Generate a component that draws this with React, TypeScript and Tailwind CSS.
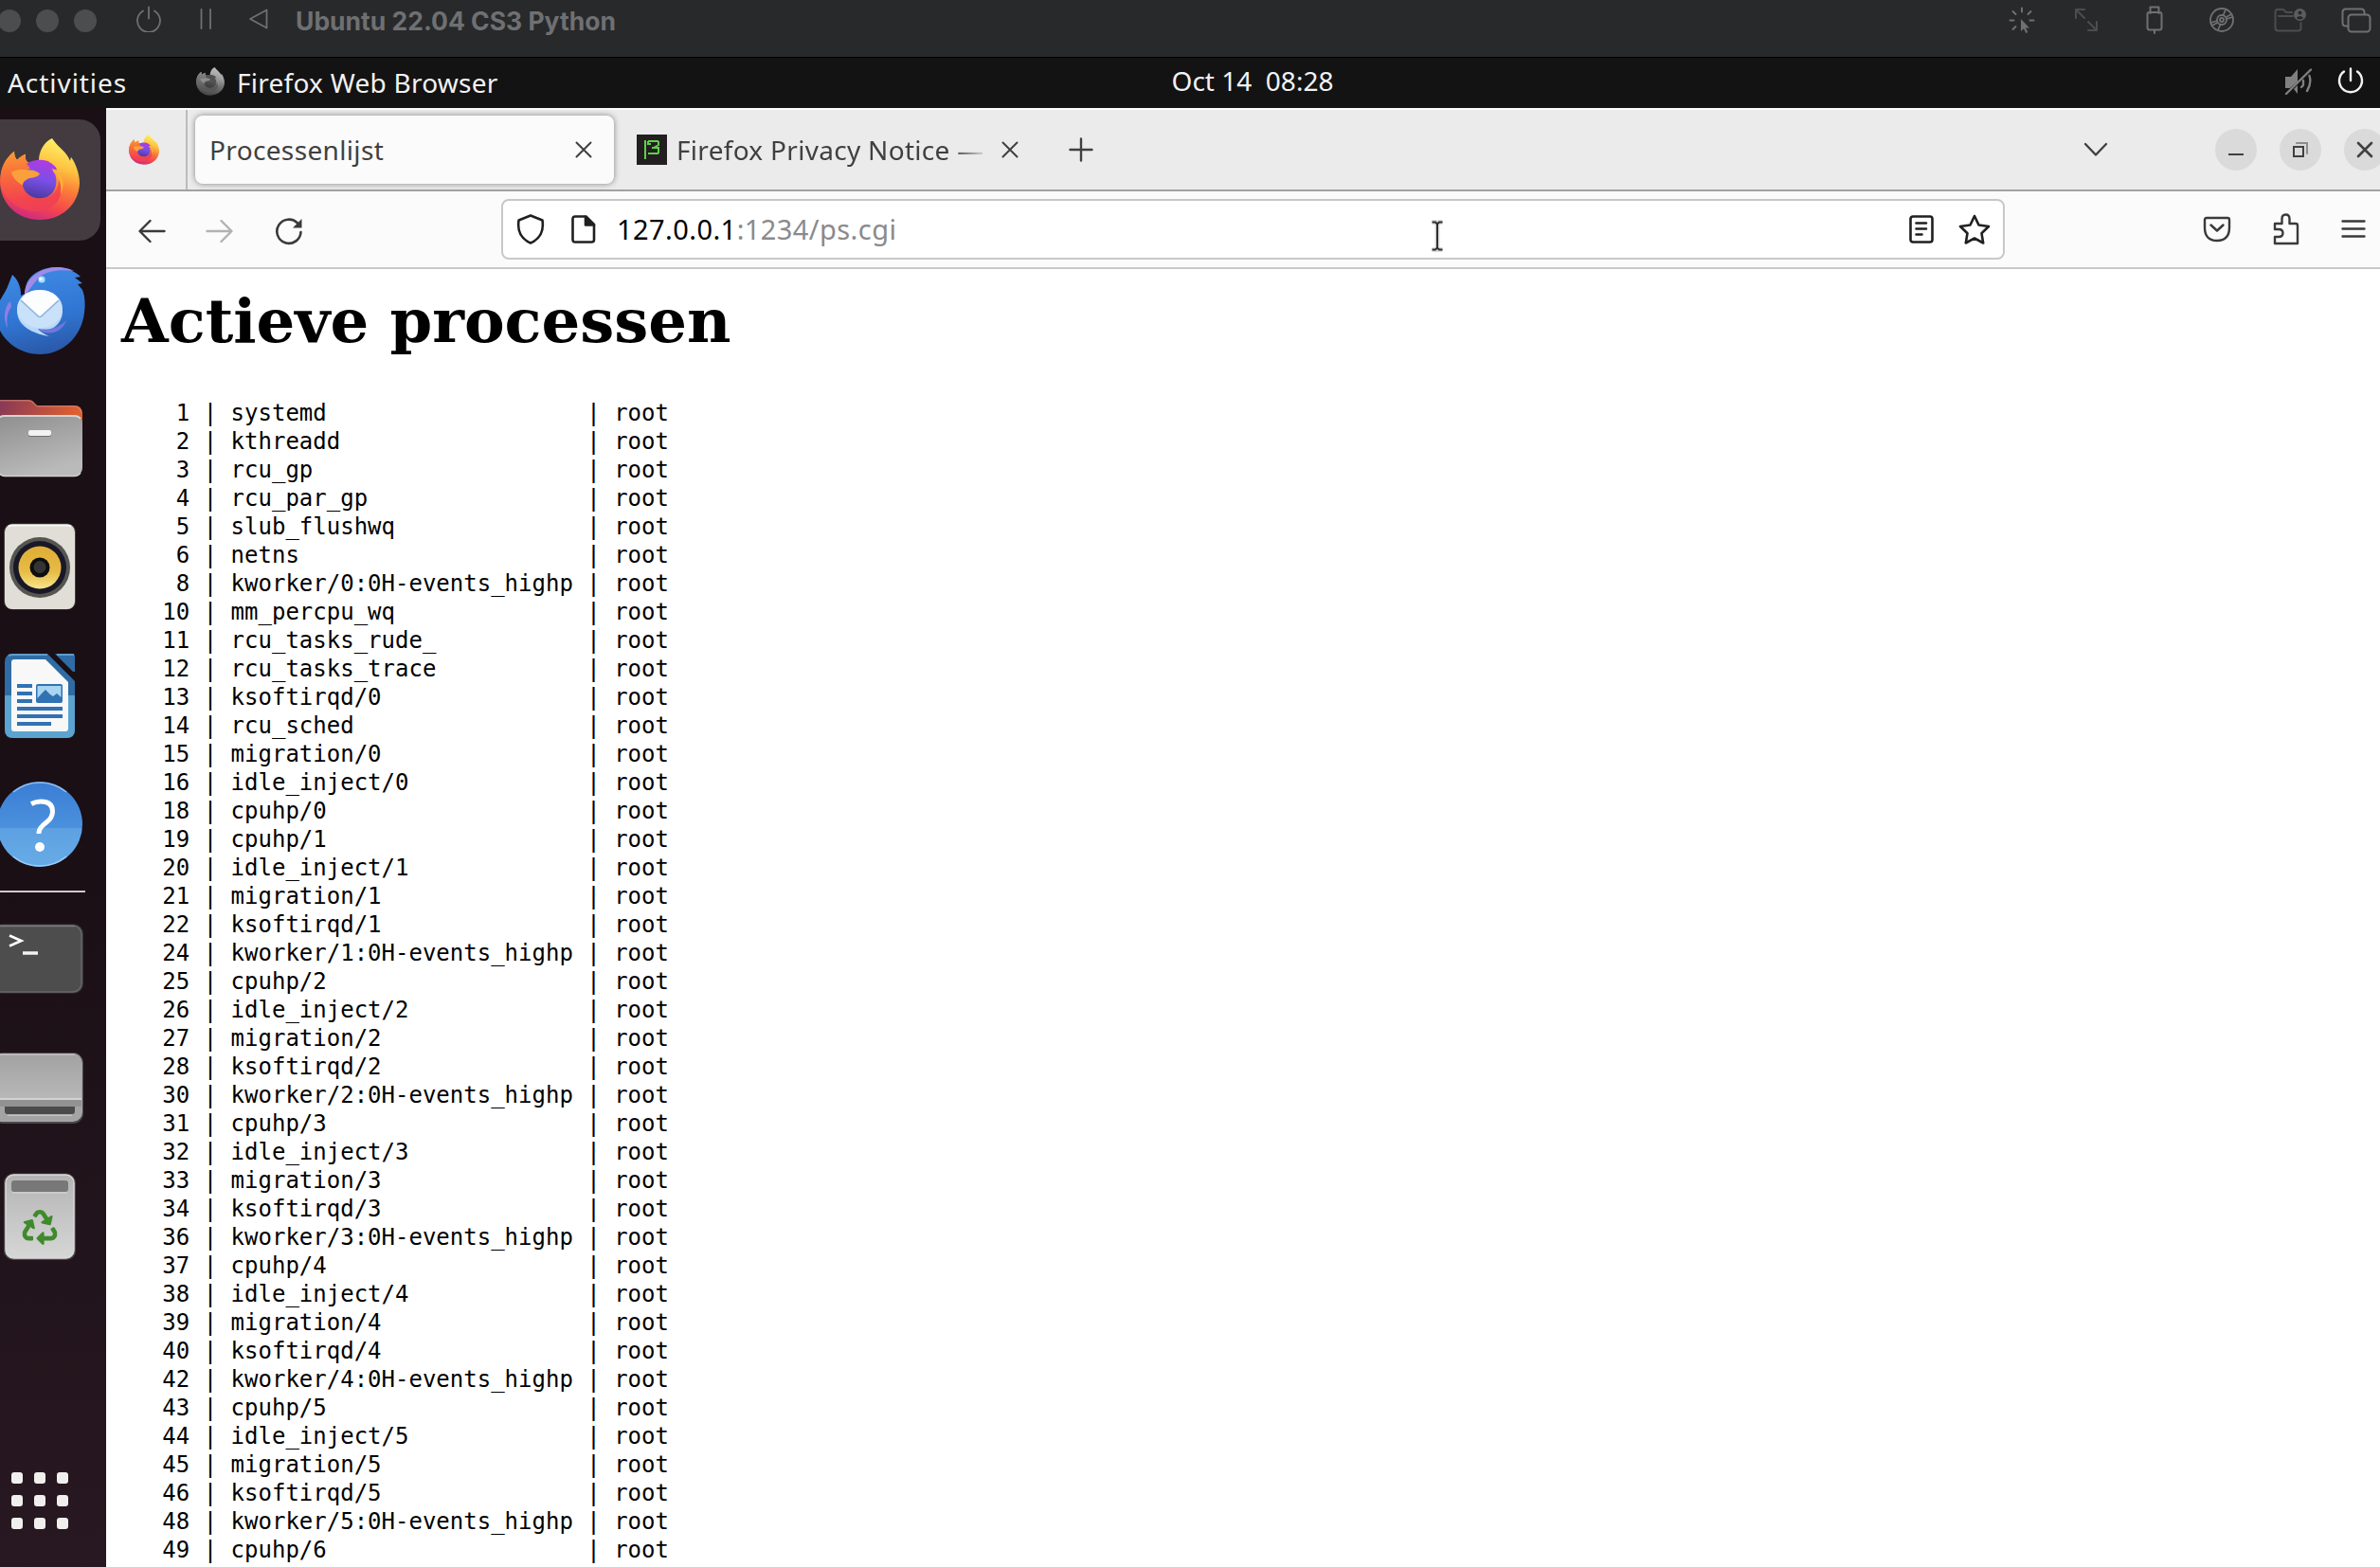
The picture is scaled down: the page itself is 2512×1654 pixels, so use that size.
import React from "react";
import { FaRecycle } from "react-icons/fa";

type Proc = [number, string];

const PROCS: Proc[] = [
  [1, "systemd"], [2, "kthreadd"], [3, "rcu_gp"], [4, "rcu_par_gp"], [5, "slub_flushwq"], [6, "netns"],
  [8, "kworker/0:0H-events_highp"], [10, "mm_percpu_wq"], [11, "rcu_tasks_rude_"], [12, "rcu_tasks_trace"],
  [13, "ksoftirqd/0"], [14, "rcu_sched"], [15, "migration/0"], [16, "idle_inject/0"], [18, "cpuhp/0"],
  [19, "cpuhp/1"], [20, "idle_inject/1"], [21, "migration/1"], [22, "ksoftirqd/1"], [24, "kworker/1:0H-events_highp"],
  [25, "cpuhp/2"], [26, "idle_inject/2"], [27, "migration/2"], [28, "ksoftirqd/2"], [30, "kworker/2:0H-events_highp"],
  [31, "cpuhp/3"], [32, "idle_inject/3"], [33, "migration/3"], [34, "ksoftirqd/3"], [36, "kworker/3:0H-events_highp"],
  [37, "cpuhp/4"], [38, "idle_inject/4"], [39, "migration/4"], [40, "ksoftirqd/4"], [42, "kworker/4:0H-events_highp"],
  [43, "cpuhp/5"], [44, "idle_inject/5"], [45, "migration/5"], [46, "ksoftirqd/5"], [48, "kworker/5:0H-events_highp"],
  [49, "cpuhp/6"],
];

const ROWS = PROCS.map(([pid, name]) => `${String(pid).padStart(5)} | ${name.padEnd(25)} | root`);

type IconProps = { className?: string; w: number; h: number; sw?: number; children: React.ReactNode };

function Icon({ className = "", w, h, sw = 2, children }: IconProps) {
  return (
    <svg
      className={`block shrink-0 ${className}`}
      width={w}
      height={h}
      viewBox={`0 0 ${w} ${h}`}
      fill="none"
      stroke="currentColor"
      strokeWidth={sw}
      strokeLinecap="round"
      strokeLinejoin="round"
    >
      {children}
    </svg>
  );
}

function Firefox({ className = "", id }: { className?: string; id: string }) {
  return (
    <svg className={`block shrink-0 ${className}`} viewBox="0 0 84 88" preserveAspectRatio="none">
      <defs>
        <linearGradient id={`${id}-b`} x1="0.72" y1="0" x2="0.4" y2="1">
          <stop offset="0" stopColor="#fff36b" />
          <stop offset="0.32" stopColor="#fdc23f" />
          <stop offset="0.55" stopColor="#fb7b38" />
          <stop offset="0.8" stopColor="#f4454e" />
          <stop offset="1" stopColor="#cf2a80" />
        </linearGradient>
        <linearGradient id={`${id}-l`} x1="0.3" y1="0" x2="0.4" y2="1">
          <stop offset="0" stopColor="#f99a35" />
          <stop offset="0.4" stopColor="#f9693c" />
          <stop offset="0.8" stopColor="#f3444f" />
          <stop offset="1" stopColor="#ee3f58" />
        </linearGradient>
        <linearGradient id={`${id}-g`} x1="0.6" y1="0" x2="0.4" y2="1">
          <stop offset="0" stopColor="#b13be0" />
          <stop offset="0.5" stopColor="#7b4fe8" />
          <stop offset="1" stopColor="#4a3a9e" />
        </linearGradient>
      </defs>
      <path
        d="M55 0C60 8 68 13 72 20L74 24L75 20C80 27 84 38 84 48C83 71 65 87 42 87C18 87 0 69 0 46C0 33 5 22 15 14C15 18 16 21 18 23C21 20 24 18 27 17C26 21 27 24 30 26L41 24C41 14 46 4 55 0Z"
        fill={`url(#${id}-b)`}
      />
      <path
        d="M15 14C15 18 16 21 18 23C21 20 24 18 27 17C26 21 27 24 30 26L34 30L24 46C26 60 38 66 52 62C58 59 62 52 62 44C70 62 58 78 36 78C18 76 4 64 1 50C-1 34 5 22 15 14Z"
        fill={`url(#${id}-l)`}
      />
      <path d="M28 27C36 22 48 22 53 26C58 29 60 32 60 34C56 32 54 33 58 38C62 48 58 64 42 64C30 64 22 54 24 44C25 38 28 34 32 32Z" fill={`url(#${id}-g)`} />
      <path d="M12 36C20 32 28 34 32 34C36 34 40 36 42 38C40 42 34 42 30 43C26 45 24 47 24 50C18 47 13 42 12 36Z" fill="#f9a03a" />
      <path d="M54 32C66 36 70 46 64 60C66 48 62 38 54 32Z" fill="#fbb03b" />
    </svg>
  );
}

function DockItem({ children }: { children: React.ReactNode }) {
  return (
    <svg className="block h-[136px] w-[112px] shrink-0" viewBox="0 0 112 136">
      {children}
    </svg>
  );
}

function Dock() {
  return (
    <nav className="flex w-[112px] shrink-0 flex-col bg-linear-to-b from-[#1a0f15] from-50% to-[#281821] pt-2">
      <div className="flex h-[136px] items-center">
        <div className="flex h-[128px] w-[106px] items-center rounded-r-[22px] bg-[#433b40]">
          <Firefox id="dock" className="-mt-0.5 h-[87px] w-[84px]" />
        </div>
      </div>

      <DockItem>
        <defs>
          <linearGradient id="tb" x1="0.4" y1="0" x2="0.6" y2="1">
            <stop offset="0" stopColor="#3f8ae6" />
            <stop offset="0.6" stopColor="#2f74d0" />
            <stop offset="1" stopColor="#2a57a6" />
          </linearGradient>
          <linearGradient id="env" x1="0" y1="0" x2="0" y2="1">
            <stop offset="0" stopColor="#ffffff" />
            <stop offset="1" stopColor="#bfdcf8" />
          </linearGradient>
        </defs>
        <path
          d="M13 32C18 36 22 44 22 52L27 48C27 34 42 24 60 24C72 25 80 29 85 34L79 35L87 41L82 42L87 48C90 56 90 64 89 72C86 98 66 116 42 116C18 116 -4 98 -5 72C-3 60 6 52 9 42Z"
          fill="url(#tb)"
        />
        <path d="M22 40L26 36V52L22 54Z" fill="#1a0f15" />
        <path d="M26 54C25 36 44 24 60 24C68 24 74 26 78 28C62 26 50 28 42 34C34 42 32 48 26 54Z" fill="#a08be8" />
        <path d="M11 60C4 66 3 80 8 88C6 76 9 70 12 66Z" fill="#8f7ee8" />
        <path d="M20 62C14 76 22 92 52 97C46 94 42 92 40 89C54 94 66 84 66 70Z" fill="#b8d8f8" />
        <path d="M40 89C52 91 62 88 70 80C66 92 54 96 44 92Z" fill="#6f78dc" />
        <ellipse cx="42" cy="68" rx="24" ry="20" fill="#c9e1f9" />
        <path d="M22 58C26 51 34 48 42 48C50 48 58 51 62 58L44 75Q42 77 40 75Z" fill="#fbfdff" />
        <path d="M22 59L40 75.500Q42 77.500 44 75.500L62 59" fill="none" stroke="#8fb4de" strokeWidth="1.600" />
        <circle cx="44" cy="37" r="3.600" fill="#a9dcfb" />
        <circle cx="43" cy="36.500" r="1.600" fill="#fff" />
      </DockItem>

      <DockItem>
        <defs>
          <linearGradient id="fo" x1="0" y1="0" x2="1" y2="0.2">
            <stop offset="0" stopColor="#82365a" />
            <stop offset="1" stopColor="#e2622e" />
          </linearGradient>
          <linearGradient id="ff" x1="0" y1="0" x2="0.4" y2="1">
            <stop offset="0" stopColor="#8e8e8e" />
            <stop offset="1" stopColor="#bababa" />
          </linearGradient>
        </defs>
        <path d="M-4 28H30Q34 28 36 31L39 34H78Q87 34 87 43V70H-4Z" fill="url(#fo)" />
        <path d="M-4 28.700H30Q33.500 28.700 36 32L39 34.700H78Q85 35 86 42" fill="none" stroke="#d68a78" strokeOpacity="0.6" strokeWidth="1.400" />
        <rect x="-4" y="44" width="91" height="65" rx="9" fill="url(#ff)" />
        <path d="M-2 48Q0 45 5 45H78Q83 45 85 48" fill="none" stroke="#d4d4d4" strokeWidth="2" />
        <path d="M0 106Q2 108.500 5 108.500H78Q83 108.500 85 105" fill="none" stroke="#d0d0d0" strokeWidth="1.500" />
        <rect x="30" y="62" width="24" height="5" rx="2" fill="#707070" />
        <rect x="30" y="60" width="24" height="6" rx="2" fill="#f2f2f2" />
      </DockItem>

      <DockItem>
        <defs>
          <linearGradient id="rb" x1="0" y1="0" x2="0" y2="1">
            <stop offset="0" stopColor="#e0ac34" />
            <stop offset="0.6" stopColor="#e6bc46" />
            <stop offset="1" stopColor="#f8e68c" />
          </linearGradient>
        </defs>
        <rect x="4" y="22.500" width="76" height="91" rx="9" fill="#45423f" />
        <rect x="5" y="23.500" width="74" height="89.500" rx="8" fill="#e1ded7" />
        <path d="M9 25.500Q11 24.500 13 24.500H71Q73 24.500 75 25.500" fill="none" stroke="#f7f6f3" strokeWidth="2" />
        <circle cx="42" cy="69" r="32" fill="#555552" />
        <circle cx="42" cy="69" r="28" fill="#191828" />
        <circle cx="42" cy="69" r="22.500" fill="url(#rb)" />
        <circle cx="42" cy="69" r="10.500" fill="#0e0e0e" />
        <circle cx="42" cy="68.500" r="6.500" fill="#343434" />
      </DockItem>

      <DockItem>
        <path d="M14 24H50L79 53V104Q79 113 70 113H14Q5 113 5 104V33Q5 24 14 24Z" fill="#2f6ca5" />
        <path d="M5 68H79V104Q79 113 70 113H14Q5 113 5 104Z" fill="#5ba3d0" />
        <path d="M58 24H76Q79 24 79 27V43H77Z" fill="#2f6ca5" />
        <path d="M60 25H78" stroke="#5f9ccb" strokeWidth="2" />
        <path d="M9 26Q11 25 14 25H50" fill="none" stroke="#5f9ccb" strokeWidth="2" />
        <path d="M15 30H48L72 54V103Q72 106 69 106H15Q12 106 12 103V33Q12 30 15 30Z" fill="#f8f8f8" />
        <path d="M18 56h16v4h-16zM18 64h16v4h-16zM18 72h16v4h-16zM18 80h48v4h-48zM18 88h48v4h-48zM18 96h36v4h-36z" fill="#3172b3" />
        <rect x="38" y="56" width="28" height="20" rx="2" fill="#3172b3" />
        <path d="M39.500 58H64.500V70L60 66L56 69L53 67L48 62L44 66L39.500 71Z" fill="#a9d5f2" />
      </DockItem>

      <DockItem>
        <defs>
          <clipPath id="helpclip">
            <circle cx="42" cy="68" r="45" />
          </clipPath>
          <linearGradient id="hp" x1="0" y1="0" x2="0" y2="1">
            <stop offset="0" stopColor="#3a7dd4" />
            <stop offset="1" stopColor="#5aa2e4" />
          </linearGradient>
        </defs>
        <circle cx="42" cy="68" r="45" fill="url(#hp)" />
        <rect x="-4" y="72" width="95" height="42" fill="#7ab8ec" fillOpacity="0.4" clipPath="url(#helpclip)" />
        <path d="M14 34A44 44 0 0 1 70 34" fill="none" stroke="#a8cdf2" strokeOpacity="0.8" strokeWidth="1.500" />
        <path d="M14 102A44 44 0 0 0 70 102" fill="none" stroke="#b5dcf6" strokeOpacity="0.7" strokeWidth="1.500" />
        <path d="M33 46.500Q38 44 43 44Q55.500 44 55.500 54.500Q55.500 61 49 66Q41 72 41 77V78" fill="none" stroke="#fff" strokeWidth="5" />
        <circle cx="42" cy="92" r="5" fill="#fff" />
      </DockItem>

      <div className="flex h-1.5 shrink-0 items-center">
        <div className="h-0.5 w-[90px] bg-[#cfcacd]" />
      </div>

      <DockItem>
        <rect x="-8" y="31.500" width="96" height="73" rx="10" fill="#3a3538" />
        <rect x="-7" y="33" width="93" height="70" rx="9" fill="#4d4d4d" stroke="#686868" strokeWidth="1.500" />
        <path d="M-2 33.500H79" stroke="#7b7b7b" strokeWidth="1.500" />
        <path d="M10 43.500L22.500 49L10 54.500" fill="none" stroke="#fff" strokeWidth="2.600" />
        <path d="M24 62H40" stroke="#f2f2f2" strokeWidth="3.500" />
      </DockItem>

      <DockItem>
        <defs>
          <linearGradient id="dr" x1="0" y1="0" x2="0" y2="1">
            <stop offset="0" stopColor="#a2a2a2" />
            <stop offset="1" stopColor="#b8b8b8" />
          </linearGradient>
        </defs>
        <rect x="-8" y="31" width="96" height="75" rx="11" fill="#4c474a" />
        <rect x="-8" y="32" width="95" height="72" rx="10" fill="#a4a4a4" />
        <path d="M-8 32H77Q86 32 86 42V80H-8Z" fill="url(#dr)" />
        <path d="M-2 33H79" stroke="#c0c0c0" strokeWidth="1.500" />
        <path d="M-8 80H86" stroke="#d2d2d2" strokeWidth="2" />
        <path d="M0 81H86V88H0Z" fill="#929292" />
        <path d="M5 88H79V93Q79 96 76 96H8Q5 96 5 93Z" fill="#4b4b4b" />
        <path d="M8 97.200H76" stroke="#c2c2c2" strokeWidth="1.600" />
      </DockItem>

      <DockItem>
        <defs>
          <linearGradient id="tr" x1="0" y1="0" x2="0" y2="1">
            <stop offset="0" stopColor="#b4b4b4" />
            <stop offset="1" stopColor="#d6d6d6" />
          </linearGradient>
        </defs>
        <rect x="4" y="22.500" width="76" height="91.500" rx="10" fill="#4a4548" />
        <rect x="6" y="24" width="72" height="88" rx="8.500" fill="url(#tr)" stroke="#dadada" strokeWidth="1.500" />
        <rect x="12" y="30" width="60" height="12" rx="3" fill="#787878" />
        <path d="M13 43H71" stroke="#cfcfcf" strokeWidth="1.500" />
        <FaRecycle x={23.5} y={61} size={37} color="#3f8a2a" />
      </DockItem>

      <div className="mt-auto mb-10 ml-3 grid w-[60px] grid-cols-3 gap-3">
        {Array.from({ length: 9 }, (_, i) => (
          <span key={i} className="size-3 rounded-[3px] bg-[#f0efed]" />
        ))}
      </div>
    </nav>
  );
}

function TitleBar() {
  return (
    <header className="h-[61px] shrink-0 border-b border-black bg-[#28292b]">
      <div className="flex h-11 items-center text-[#6f7072]">
        <div className="-ml-0.5 flex gap-4">
          <span className="size-6 rounded-full bg-[#4c4d4f]" />
          <span className="size-6 rounded-full bg-[#4c4d4f]" />
          <span className="size-6 rounded-full bg-[#4c4d4f]" />
        </div>
        <Icon className="-mt-1 ml-[41px]" w={28} h={28} sw={1.8}>
          <path d="M14 1.500V13.500M8 5.500A12 12 0 1 0 20 5.500" />
        </Icon>
        <Icon className="-mt-1 ml-[40px]" w={13} h={22} sw={1.8}>
          <path d="M1.500 1V21M11 1V21" />
        </Icon>
        <Icon className="-mt-1 ml-[38px]" w={22} h={22} sw={1.8}>
          <path d="M19.500 1.500V20.500L2 11Z" />
        </Icon>
        <span className="ml-[28px] font-['Inter'] text-[26.5px] leading-[46px] font-bold whitespace-pre">Ubuntu 22.04 CS3 Python</span>

        <div className="-mt-0.5 mr-[9px] ml-auto flex items-center">
          <Icon w={28} h={28} sw={2}>
            <path d="M14 1.500V5.500M1.500 14.500H5.500M22.500 14.500H26.500M4.500 5L7.500 8M23.500 5L20.500 8M4.500 24L7.500 21" />
            <path d="M13 13V26L16 23.200L18.300 28L20.300 27L18 22.500H22Z" fill="currentColor" stroke="none" />
          </Icon>
          <Icon className="ml-[41px] text-[#4c4d4f]" w={26} h={26}>
            <path d="M2 11V2H11M2 2L11 11M24 15V24H15M24 24L15 15" />
          </Icon>
          <Icon className="ml-[50px]" w={18} h={30}>
            <path d="M4.500 8V1.500H13.500V8M3.500 7H14.500Q16.500 7 16.500 9V23Q16.500 25.500 14 25.500H4Q1.500 25.500 1.500 23V9Q1.500 7 3.500 7ZM9 26V29" />
          </Icon>
          <Icon className="ml-[49px]" w={26} h={26} sw={1.8}>
            <circle cx="13" cy="13" r="12" />
            <circle cx="13" cy="13" r="5" />
            <circle cx="13" cy="13" r="2" />
            <path d="M17.500 10L23.500 7M18 12L24.500 10M8.500 16L2.500 19M8 14L1.500 16M14.500 8L17 2.500M11.500 18L9 23.500" />
          </Icon>
          <Icon className="ml-[42px] text-[#4c4d4f]" w={34} h={26}>
            <path d="M19 5H13L10 2H4Q1.500 2 1.500 4.500V21.500Q1.500 24.500 4.500 24.500H25.500Q28.500 24.500 28.500 21.500V16M5 9H20" />
            <circle cx="27.500" cy="7.500" r="6.500" fill="#5c5d5f" stroke="none" />
            <circle cx="27.500" cy="5.500" r="2" fill="#28292b" stroke="none" />
            <path d="M23.800 11Q27.500 7 31.200 11Q27.500 14 23.800 11Z" fill="#28292b" stroke="none" />
          </Icon>
          <Icon className="ml-[37px]" w={32} h={27}>
            <path d="M7 19.500H5Q1.500 19.500 1.500 16V5Q1.500 1.500 5 1.500H21Q24.500 1.500 24.500 5V7" />
            <rect x="7.500" y="7.500" width="23" height="18" rx="3.500" />
          </Icon>
        </div>
      </div>
    </header>
  );
}

function TopBar() {
  return (
    <div className="grid h-[53px] shrink-0 grid-cols-[1fr_auto_1fr] items-center bg-[#131313] font-['Noto_Sans'] text-[28px] leading-[50px] whitespace-pre text-[#f2f2f2]">
      <div className="flex items-center">
        <span className="-mt-0.5 ml-2 w-[199px] tracking-[0.95px]">Activities</span>
        <Firefox id="top" className="-mt-1 h-[30px] w-[30px] opacity-80 grayscale" />
        <span className="-mt-0.5 ml-[13px] tracking-[0.25px]">Firefox Web Browser</span>
      </div>
      <span className="-mt-1.5 ml-[132px]">Oct 14  08:28</span>
      <div className="mr-[17px] ml-auto flex items-center gap-[27px]">
        <Icon className="-mt-0.5 text-[#808080]" w={29} h={29} sw={2.4}>
          <path d="M1 9H7L14 1V14L6 21H1Z" fill="currentColor" stroke="none" />
          <path d="M10 22L14 18V27Z" fill="currentColor" stroke="none" />
          <path d="M2 27L28 1.500M20 13V18L18 20M26.500 8Q29 16 24 24" />
        </Icon>
        <Icon className="-mt-1.5 text-[#f2f2f2]" w={28} h={28} sw={2.4}>
          <path d="M14 1.500V14M7 4.500A12 12 0 1 0 21 4.500" />
        </Icon>
      </div>
    </div>
  );
}

function CloseGlyph({ className = "" }: { className?: string }) {
  return (
    <Icon className={className} w={18} h={18} sw={2}>
      <path d="M1.500 1.500L16.500 16.500M16.500 1.500L1.500 16.500" />
    </Icon>
  );
}

function TabStrip() {
  return (
    <div className="flex h-[88px] shrink-0 items-center border-t-2 border-b-2 border-t-[#fbfbfb] border-b-[#a2a2a2] bg-[#ebebeb] font-['Noto_Sans'] text-[28px] whitespace-pre text-[#404040]">
      <div className="flex h-full w-[86px] shrink-0 items-center border-r-2 border-[#bcbcbc] pl-6">
        <Firefox id="pin" className="h-8 w-8" />
      </div>
      <div className="ml-2 flex h-[72px] w-[442px] shrink-0 items-center rounded-lg bg-[#fbfbfb] pr-[23px] pl-[15px] shadow-[0_0_6px_rgba(0,0,0,0.45)]">
        <span className="leading-[76px] tracking-[0.35px]">Processenlijst</span>
        <CloseGlyph className="ml-auto" />
      </div>
      <div className="ml-6 flex shrink-0 items-center">
        <div className="flex size-8 items-center justify-center bg-[#231f20]">
          <svg width="20" height="22" viewBox="0 0 20 22" fill="none" stroke="#5fd04a" strokeWidth="2">
            <path d="M3 1V21M6 2H17M17 2V6L12 9M10 9H17V15M17 15H6M6 2V5H9" />
          </svg>
        </div>
        <span className="ml-2.5 w-[330px] overflow-hidden mask-r-from-88% mask-r-to-100% leading-[76px] tracking-[0.3px]">Firefox Privacy Notice — </span>
        <CloseGlyph className="ml-[13px]" />
      </div>
      <Icon className="ml-[53px]" w={26} h={26} sw={2.4}>
        <path d="M13 1.500V24.500M1.500 13H24.500" />
      </Icon>
      <Icon className="mr-[113px] ml-auto" w={26} h={16} sw={2.4}>
        <path d="M2 2L13 13.500L24 2" />
      </Icon>
      <div className="-mr-1.5 flex gap-6">
        <span className="flex size-11 items-center justify-center rounded-full bg-[#dadada]">
          <Icon w={18} h={18} sw={2}><path d="M1 14H17" strokeLinecap="butt" /></Icon>
        </span>
        <span className="flex size-11 items-center justify-center rounded-full bg-[#dadada]">
          <Icon w={18} h={18} sw={2}>
            <path d="M2 6H12V16H2Z" strokeLinejoin="miter" />
            <path d="M5 2H16V13" stroke="#8c8c8c" strokeLinejoin="miter" />
          </Icon>
        </span>
        <span className="flex size-11 items-center justify-center rounded-full bg-[#dadada]">
          <Icon w={18} h={18} sw={2.6}><path d="M2 2L16 16M16 2L2 16" /></Icon>
        </span>
      </div>
    </div>
  );
}

function NavBar() {
  return (
    <div className="flex h-[82px] shrink-0 items-center border-b-2 border-[#c8c8c8] bg-[#fbfbfb] text-[#3a3a3a]">
      <Icon className="mt-1 ml-[33px]" w={30} h={26} sw={2.4}>
        <path d="M28.500 13H3M13.500 2L2.500 13L13.500 24" />
      </Icon>
      <Icon className="mt-1 ml-[42px] text-[#b2b2b2]" w={30} h={26} sw={2.4}>
        <path d="M1.500 13H27M16.500 2L27.500 13L16.500 24" />
      </Icon>
      <Icon className="mt-1 ml-[43px]" w={30} h={30} sw={2.6}>
        <path d="M27.500 16A12.600 12.600 0 1 1 24 6.500" />
        <path d="M28.500 2V11.500H19Z" fill="currentColor" stroke="none" />
      </Icon>
      <div className="ml-[209px] flex h-16 w-[1587px] shrink-0 items-center rounded-lg border-2 border-[#c8c8c8] bg-white text-[#202020]">
        <Icon className="ml-[13px]" w={32} h={32} sw={2.6}>
          <path d="M16 1.500L28.500 6.500Q31 24 16 30.500Q1 24 3.500 6.500Z" />
        </Icon>
        <Icon className="ml-[27px]" w={26} h={30} sw={2.6}>
          <path d="M4 1.500H15.500L24 10V26Q24 28.500 21.500 28.500H4Q1.500 28.500 1.500 26V4Q1.500 1.500 4 1.500Z" />
          <path d="M15 2V10.500H24Z" fill="currentColor" />
        </Icon>
        <span className="ml-[22px] font-['Noto_Sans'] text-[29px] leading-[60px] tracking-[0.42px] whitespace-pre text-[#8a8a8c]">
          <span className="text-black">127.0.0.1</span>:1234/ps.cgi
        </span>
        <div className="mr-[13px] ml-auto flex items-center">
          <Icon w={26} h={30} sw={2.6}>
            <rect x="1.500" y="1.500" width="23" height="27" rx="2.500" />
            <path d="M7.500 8.500H18M7.500 14.500H18M7.500 20.500H13.500" />
          </Icon>
          <Icon className="ml-[26px]" w={34} h={33} sw={2.6}>
            <path d="M17 2L21.500 11.500L32 13L24.500 20.200L26.200 30.500L17 25.500L7.800 30.500L9.500 20.200L2 13L12.500 11.500Z" />
          </Icon>
        </div>
      </div>
      <div className="mr-[15px] ml-auto flex items-center">
        <Icon w={30} h={28} sw={2.4}>
          <path d="M4 2H26Q28 2 28 4V12Q28 26 15 26Q2 26 2 12V4Q2 2 4 2Z" />
          <path d="M8.500 9.500L15 15.500L21.500 9.500" />
        </Icon>
        <Icon className="ml-[44px]" w={28} h={34} sw={2.4}>
          <path d="M2 11H9.500V6Q9.500 1.500 13.500 1.500Q17.500 1.500 17.500 6V11H24Q26 11 26 13V32H2V25H6Q10.500 25 10.500 21Q10.500 17 6 17H2Z" />
        </Icon>
        <Icon className="ml-[44px]" w={26} h={22} sw={2.4}>
          <path d="M1.500 2.500H24.500M1.500 10.500H24.500M1.500 18.500H24.500" />
        </Icon>
      </div>
    </div>
  );
}

function TextCursor() {
  return (
    <svg className="absolute top-[229px] left-[1508px] h-[40px] w-[18px]" viewBox="0 0 18 40" fill="none">
      <path d="M3.500 5.500H7L9 7.500L11 5.500H14.500M9 7V33M3.500 34.500H7L9 32.500L11 34.500H14.500" stroke="#d9d9d9" strokeWidth="5" />
      <path d="M3.500 5.500H7L9 7.500L11 5.500H14.500M9 7V33M3.500 34.500H7L9 32.500L11 34.500H14.500" stroke="#2e2e30" strokeWidth="2" />
    </svg>
  );
}

export default function App() {
  return (
    <div className="relative flex h-[1654px] w-[2512px] flex-col overflow-hidden bg-white">
      <TitleBar />
      <TopBar />
      <div className="flex min-h-0 flex-1">
        <Dock />
        <main className="flex min-w-0 flex-1 flex-col overflow-hidden bg-white">
          <TabStrip />
          <NavBar />
          <div className="min-h-0 flex-1 overflow-hidden pl-4 text-black">
            <h1 className="mt-[18px] font-['DejaVu_Serif'] text-[64px] leading-[74px] font-bold whitespace-pre">Actieve processen</h1>
            <pre className="mt-[45px] font-['DejaVu_Sans_Mono'] text-[24px] leading-[30px]">{ROWS.join("\n")}</pre>
          </div>
        </main>
      </div>
      <TextCursor />
    </div>
  );
}
